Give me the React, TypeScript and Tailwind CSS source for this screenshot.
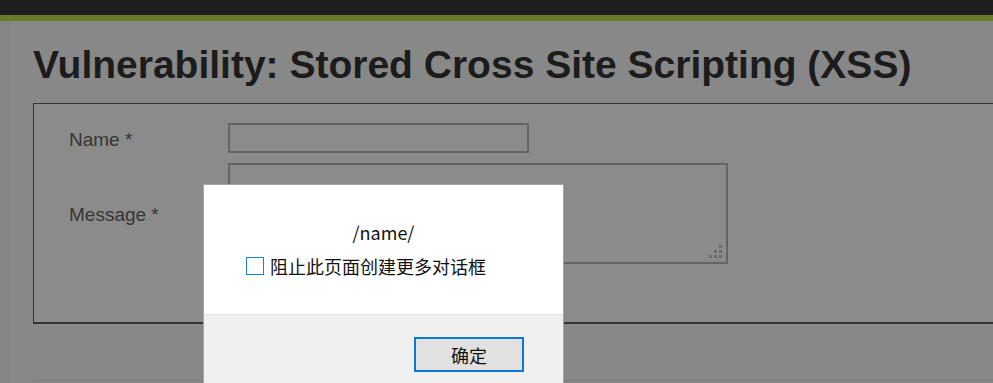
import { Check } from 'lucide-react'

// DVWA stored XSS page, dimmed behind a browser alert() dialog.
export default function App() {
  return (
    <div className="relative h-[383px] w-[993px] overflow-hidden bg-[#888888] font-['Liberation_Sans',Arial,sans-serif]">
      <div className="h-[15px] bg-[#1e1e1e]" />
      <div className="h-[6px] bg-[#6a7a29]" />

      <div className="flex">
        <div className="w-[10px] shrink-0 self-stretch bg-[#858585]" />
        <main className="flex-1 pl-[23px]">
          <h1 className="mt-[21px] whitespace-nowrap text-[39px] leading-[45px] font-bold text-[#1c1c1c]">
            Vulnerability: Stored Cross Site Scripting (XSS)
          </h1>

          <div className="mt-[16px] h-[221px] w-[990px] border border-b-2 border-[#333333] bg-[#8a8b8a] pl-[35px] pt-[19px]">
            <div className="grid grid-cols-[159px_auto] gap-y-[10px] text-[19px] text-[#363636]">
              <label className="flex h-[30px] items-center pt-[4px]">Name *</label>
              <div className="h-[30px] w-[301px] border-2 border-[#646464]" />
              <label className="flex h-[101px] items-center pt-[4px]">Message *</label>
              <div className="relative h-[101px] w-[500px] border-2 border-[#646464]">
                <ResizeGrip />
              </div>
            </div>
          </div>

          <div className="mt-[56px] h-[20px] w-[990px] border border-[#7b7b7b]" />
        </main>
      </div>

      <AlertDialog />
    </div>
  )
}

function ResizeGrip() {
  return (
    <svg className="absolute bottom-[3px] right-[3px]" width="14" height="14" viewBox="0 0 14 14">
      {[
        [10, 0],
        [5, 5],
        [10, 5],
        [0, 10],
        [5, 10],
        [10, 10],
      ].map(([x, y]) => (
        <rect key={`${x}-${y}`} x={x} y={y} width="3" height="3" fill="#6c6c6c" />
      ))}
    </svg>
  )
}

function AlertDialog() {
  return (
    <div className="absolute left-[203px] top-[184px] w-[361px] border border-[#a5a5a5] font-['Noto_Sans_CJK_SC','Liberation_Sans',sans-serif] text-[#111111]">
      <div className="h-[129px] bg-white pt-[35px]">
        <p className="text-center text-[18px] leading-[24px]">/name/</p>
        <label className="mt-[10px] flex items-center pl-[42px]">
          <span className="flex h-[18px] w-[18px] items-center justify-center border border-[#1b7fd6] bg-white">
            <Check className="hidden h-3 w-3" />
          </span>
          <span className="ml-[6px] text-[18px] leading-[24px]">阻止此页面创建更多对话框</span>
        </label>
      </div>
      <div className="h-[80px] border-t border-[#e2e2e2] bg-[#f0f0f0] pr-[39px] pt-[22px]">
        <div className="flex justify-end">
          <button className="h-[35px] w-[110px] border-2 border-[#0a78d6] bg-[#e1e1e1] text-[18px] leading-none text-[#111111]">
            确定
          </button>
        </div>
      </div>
    </div>
  )
}
